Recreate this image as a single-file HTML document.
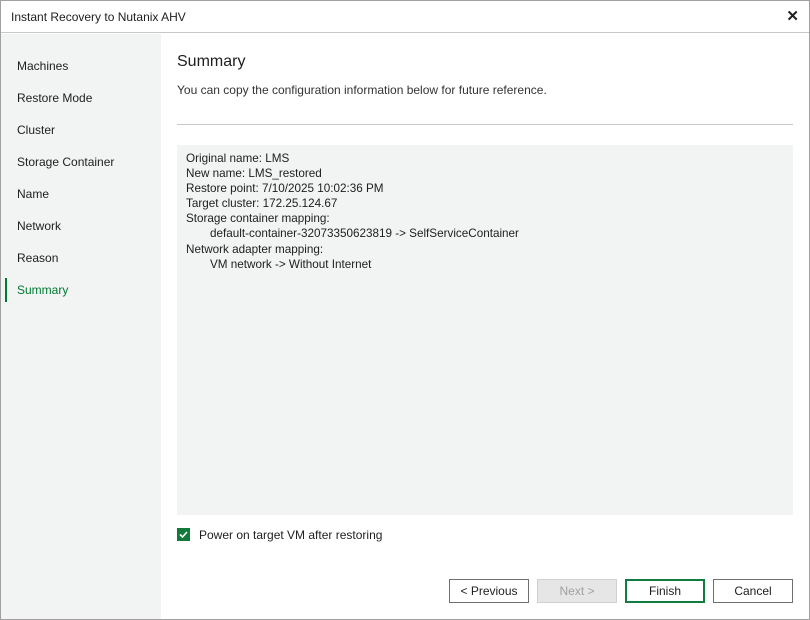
<!DOCTYPE html>
<html><head><style>
*{margin:0;padding:0;box-sizing:border-box}
body{width:810px;height:620px;background:#fff;font-family:"Liberation Sans",sans-serif;font-size:12px;color:#1e1e1e;position:relative;overflow:hidden}
.win{position:absolute;left:0;top:0;width:810px;height:620px;border:1px solid #a0a0a0}
.title{position:absolute;left:1px;top:1px;width:808px;height:32px;border-bottom:1px solid #c8c8c8;background:#fff}
.title span{position:absolute;left:10px;top:9px;font-size:12px}
.x{position:absolute;right:10px;top:6px;font-size:15px;font-weight:bold}
.side{position:absolute;left:1px;top:34px;width:160px;height:585px;background:#f2f3f3}
.side div{position:absolute;left:16px;font-size:12px}
.bar{position:absolute;left:4px;top:244px;width:2px;height:24px;background:#007a33}
.abs{position:absolute}
.box{position:absolute;left:177px;top:145px;width:616px;height:370px;background:#f2f3f3;padding:6px 9px;line-height:15.1px;font-size:11.7px}
.btn{position:absolute;top:579px;width:82px;height:24px;border:1px solid #707070;background:#fff;text-align:center;line-height:22px;font-size:12px}
</style></head><body>
<div class="win"></div>
<div class="title"><span>Instant Recovery to Nutanix AHV</span><div class="x">✕</div></div>
<div class="side">
<div style="top:25px">Machines</div>
<div style="top:57px">Restore Mode</div>
<div style="top:89px">Cluster</div>
<div style="top:121px">Storage Container</div>
<div style="top:153px">Name</div>
<div style="top:185px">Network</div>
<div style="top:217px">Reason</div>
<div style="top:249px;color:#007a33">Summary</div>
<span class="bar"></span>
</div>
<div class="abs" style="left:177px;top:53px;font-size:16px">Summary</div>
<div class="abs" style="left:177px;top:83px;font-size:12px;color:#333">You can copy the configuration information below for future reference.</div>
<div class="abs" style="left:177px;top:124px;width:616px;height:1px;background:#c8c8c8"></div>
<div class="box">Original name: LMS<br>New name: LMS_restored<br>Restore point: 7/10/2025 10:02:36 PM<br>Target cluster: 172.25.124.67<br>Storage container mapping:<br><span style="padding-left:24px">default-container-32073350623819 -&gt; SelfServiceContainer</span><br>Network adapter mapping:<br><span style="padding-left:24px">VM network -&gt; Without Internet</span></div>
<div class="abs" style="left:177px;top:528px;width:13px;height:13px;background:#117a3a"><svg width="13" height="13"><path d="M3 6.5l2.5 2.5 4.5-5" stroke="#fff" stroke-width="1.6" fill="none"/></svg></div>
<div class="abs" style="left:199px;top:528px">Power on target VM after restoring</div>
<div class="btn" style="left:449px;width:80px">&lt; Previous</div>
<div class="btn" style="left:537px;width:80px;background:#e6e6e6;border-color:#d0d0d0;color:#a0a0a0">Next &gt;</div>
<div class="btn" style="left:625px;width:80px;border:2px solid #107c41;line-height:20px">Finish</div>
<div class="btn" style="left:713px;width:80px">Cancel</div>
</body></html>
